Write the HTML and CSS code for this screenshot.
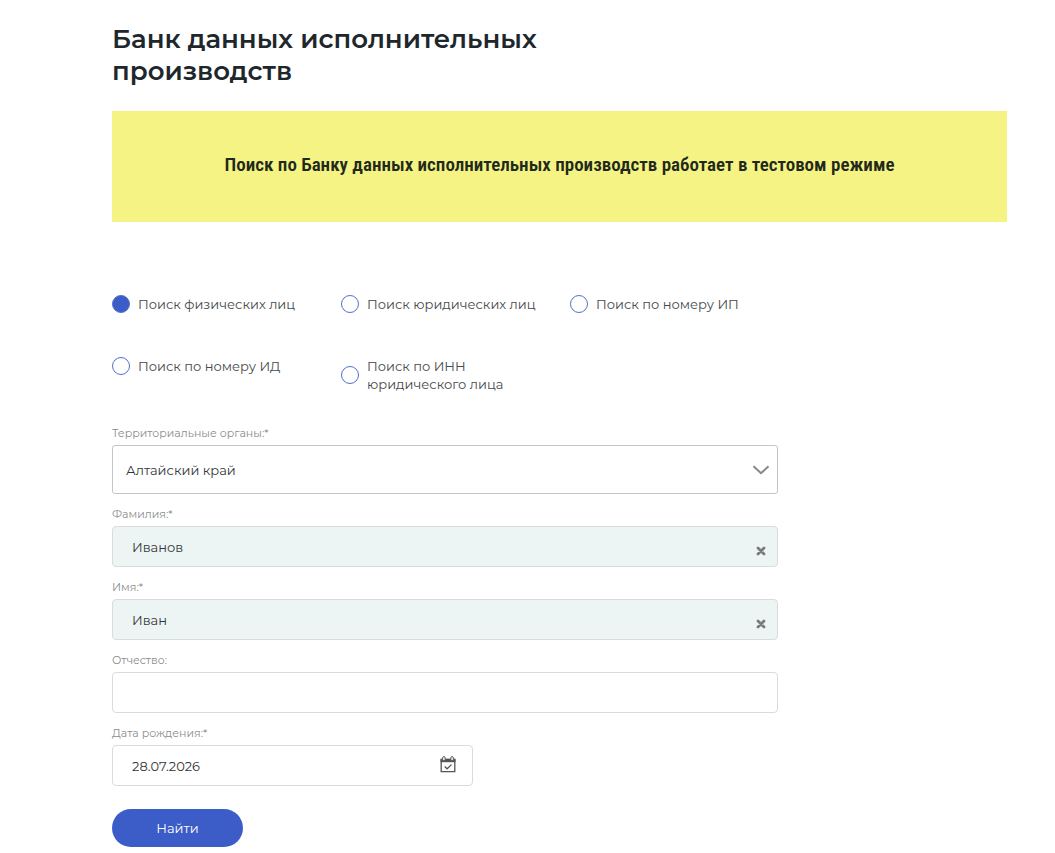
FILE: index.html
```html
<!DOCTYPE html>
<html lang="ru">
<head>
    <meta charset="UTF-8">
    <meta name="viewport" content="width=device-width, initial-scale=1.0">
    <title>Банк данных исполнительных производств</title>
    <link rel="stylesheet" href="styles.css">
</head>
<body>
    <main class="page">
        <h1>Банк данных исполнительных производств</h1>

        <div class="notice">Поиск по Банку данных исполнительных производств работает в тестовом режиме</div>

        <form class="search-form">
            <div class="search-types">
                <label class="radio"><input type="radio" name="type" checked><span>Поиск физических лиц</span></label>
                <label class="radio"><input type="radio" name="type"><span>Поиск юридических лиц</span></label>
                <label class="radio"><input type="radio" name="type"><span>Поиск по номеру ИП</span></label>
                <label class="radio"><input type="radio" name="type"><span>Поиск по номеру ИД</span></label>
                <label class="radio"><input type="radio" name="type"><span>Поиск по ИНН юридического лица</span></label>
            </div>

            <div class="field">
                <label for="region">Территориальные органы:*</label>
                <div class="control">
                    <select id="region">
                        <option>Алтайский край</option>
                    </select>
                    <svg class="arrow" width="18" height="10" viewBox="0 0 18 10"><path d="M1.5 1.2L9 8.2L16.5 1.2" fill="none" stroke="#888" stroke-width="2"/></svg>
                </div>
            </div>

            <div class="field">
                <label for="lastname">Фамилия:*</label>
                <div class="control">
                    <input type="text" id="lastname" class="filled" value="Иванов">
                    <button type="button" class="clear" aria-label="Очистить">
                        <svg width="10" height="10" viewBox="0 0 10 10"><path d="M2 2L8 8M8 2L2 8" stroke="#777c7b" stroke-width="2.8" stroke-linecap="round"/></svg>
                    </button>
                </div>
            </div>

            <div class="field">
                <label for="firstname">Имя:*</label>
                <div class="control">
                    <input type="text" id="firstname" class="filled" value="Иван">
                    <button type="button" class="clear" aria-label="Очистить">
                        <svg width="10" height="10" viewBox="0 0 10 10"><path d="M2 2L8 8M8 2L2 8" stroke="#777c7b" stroke-width="2.8" stroke-linecap="round"/></svg>
                    </button>
                </div>
            </div>

            <div class="field">
                <label for="patronymic">Отчество:</label>
                <div class="control">
                    <input type="text" id="patronymic">
                </div>
            </div>

            <div class="field field-date">
                <label for="birthday">Дата рождения:*</label>
                <div class="control">
                    <input type="text" id="birthday" value="28.07.2026">
                    <button type="button" class="calendar" aria-label="Календарь">
                        <svg width="16" height="17" viewBox="0 0 16 17">
                            <path d="M1.2 3.5V15.6H14.8V3.5" fill="none" stroke="#555" stroke-width="1.3"/>
                            <path d="M.5 2.6H15.5V6.2H.5Z" fill="#555"/>
                            <rect x="2.7" y=".6" width="2.4" height="4.2" rx="1.2" fill="#fff" stroke="#555"/>
                            <rect x="10.9" y=".6" width="2.4" height="4.2" rx="1.2" fill="#fff" stroke="#555"/>
                            <path d="M4.7 10.5L7.1 12.8L11.5 8.6" fill="none" stroke="#555" stroke-width="1.3"/>
                        </svg>
                    </button>
                </div>
            </div>

            <button type="submit" class="submit">Найти</button>
        </form>
    </main>
</body>
</html>
```
FILE: styles.css
```css
* {
    margin: 0;
    padding: 0;
    box-sizing: border-box;
}

body {
    font-family: Montserrat, Inter, "Open Sans", sans-serif;
    font-size: 13px;
    line-height: 18px;
    color: #454a4b;
    background: #fff;
}

.page {
    padding: 23px 48px 6px 112px;
}

h1 {
    max-width: 448px;
    margin-bottom: 24px;
    font-size: 26px;
    font-weight: 600;
    line-height: 32px;
    color: #1d272c;
}

.notice {
    padding: 40px 24px 44px;
    background: #f5f384;
    color: #1f2a1c;
    font-family: "Roboto Condensed", Roboto, sans-serif;
    font-size: 19px;
    font-weight: 600;
    line-height: 27px;
    text-align: center;
}

.search-form {
    max-width: 666px;
    margin-top: 73px;
}

.search-types {
    display: grid;
    grid-template-columns: repeat(3, 1fr);
    column-gap: 12px;
    row-gap: 44px;
    align-items: start;
    max-width: 675px;
    margin-right: -9px;
    margin-bottom: 32px;
}

.radio {
    display: flex;
    align-items: center;
    gap: 8px;
    max-width: 200px;
    cursor: pointer;
}

.radio input {
    appearance: none;
    flex: none;
    width: 18px;
    height: 18px;
    border: 1px solid #5570cc;
    border-radius: 50%;
    background: #fff;
}

.radio input:checked {
    background: #3c5cc8;
}

.field {
    margin-bottom: 12px;
}

.field label {
    display: block;
    margin-bottom: 4px;
    font-size: 11px;
    line-height: 16px;
    color: #8c8c8c;
}

.control {
    position: relative;
}

.control input,
.control select {
    display: block;
    width: 100%;
    height: 41px;
    padding: 0 40px 0 19px;
    border: 1px solid #d9dcdc;
    border-radius: 4px;
    background: #fff;
    color: #323637;
    font: inherit;
}

.control select {
    appearance: none;
    height: 49px;
    padding-left: 13px;
    border-color: #c4c4c4;
    border-radius: 3px;
}

.control .filled {
    background: #edf5f4;
}

.arrow {
    position: absolute;
    top: 20px;
    right: 8px;
    pointer-events: none;
}

.clear,
.calendar {
    position: absolute;
    display: flex;
    border: 0;
    background: none;
    cursor: pointer;
}

.clear {
    top: 20px;
    right: 12px;
}

.calendar {
    top: 11px;
    right: 17px;
}

.field-date {
    max-width: 361px;
}

.submit {
    display: block;
    min-width: 131px;
    height: 38px;
    margin-top: 23px;
    border: 0;
    border-radius: 19px;
    background: #3c5cc8;
    color: #fff;
    font: inherit;
    cursor: pointer;
}
```
